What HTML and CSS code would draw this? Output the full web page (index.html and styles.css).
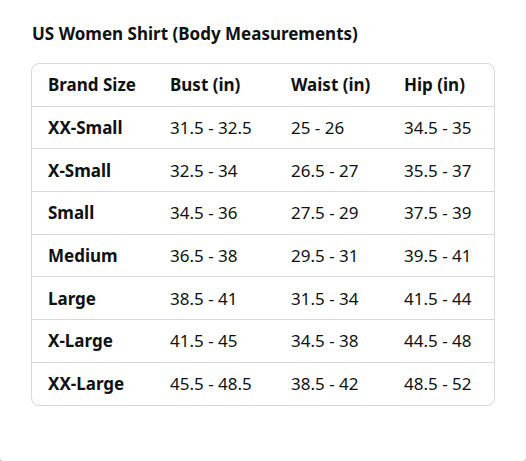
FILE: index.html
```html
<!DOCTYPE html>
<html>
<head>
<meta charset="utf-8">
<link rel="stylesheet" href="styles.css">
</head>
<body>
<div class="panel">
  <h2 class="title">US Women Shirt (Body Measurements)</h2>
  <div class="card">
    <table class="sizes">
      <colgroup>
        <col class="c1"><col class="c2"><col class="c3"><col class="c4">
      </colgroup>
      <thead>
        <tr><th>Brand Size</th><th>Bust (in)</th><th>Waist (in)</th><th>Hip (in)</th></tr>
      </thead>
      <tbody>
        <tr><th>XX-Small</th><td>31.5 - 32.5</td><td>25 - 26</td><td>34.5 - 35</td></tr>
        <tr><th>X-Small</th><td>32.5 - 34</td><td>26.5 - 27</td><td>35.5 - 37</td></tr>
        <tr><th>Small</th><td>34.5 - 36</td><td>27.5 - 29</td><td>37.5 - 39</td></tr>
        <tr><th>Medium</th><td>36.5 - 38</td><td>29.5 - 31</td><td>39.5 - 41</td></tr>
        <tr><th>Large</th><td>38.5 - 41</td><td>31.5 - 34</td><td>41.5 - 44</td></tr>
        <tr><th>X-Large</th><td>41.5 - 45</td><td>34.5 - 38</td><td>44.5 - 48</td></tr>
        <tr><th>XX-Large</th><td>45.5 - 48.5</td><td>38.5 - 42</td><td>48.5 - 52</td></tr>
      </tbody>
    </table>
  </div>
</div>
</body>
</html>
```
FILE: styles.css
```css
html, body {
  margin: 0;
  padding: 0;
  background: #c8c8c8;
}
body {
  width: 526px;
  height: 461px;
  overflow: hidden;
  font-family: "Noto Sans", "Open Sans", sans-serif;
  color: #0f1111;
}
.panel {
  width: 526px;
  height: 461px;
  box-sizing: border-box;
  padding: 23px 31px 0 31px;
  background: #fff;
  border-radius: 0 0 4px 4px;
}
.title {
  margin: 0 0 18px 1px;
  font-size: 17px;
  font-weight: 700;
  line-height: 22px;
}
.card {
  width: 464px;
  box-sizing: border-box;
  border: 1px solid #d5d9d9;
  border-radius: 8px;
  overflow: hidden;
}
.sizes {
  width: 100%;
  border-collapse: collapse;
  table-layout: fixed;
  font-size: 17px;
}
.c1 { width: 122px; }
.c2 { width: 121px; }
.c3 { width: 113px; }
.c4 { width: auto; }
.sizes th, .sizes td {
  text-align: left;
  padding: 0 0 0 16px;
  height: 41.7px;
  white-space: nowrap;
}
.sizes th { font-weight: 700; }
.sizes td { font-weight: 400; }
.sizes tbody tr th, .sizes tbody tr td {
  border-top: 1px solid #d5d9d9;
}
```
